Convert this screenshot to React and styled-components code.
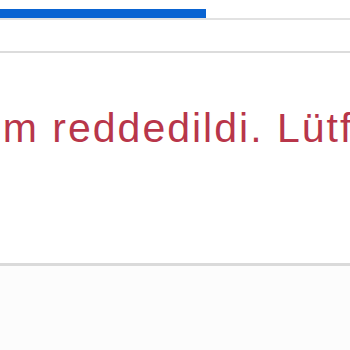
import React from 'react';
import styled, { createGlobalStyle } from 'styled-components';

const Global = createGlobalStyle`
  html, body {
    margin: 0;
    padding: 0;
    background: #fcfcfc;
    font-family: 'Liberation Sans', Arial, sans-serif;
  }
`;

const Page = styled.div`
  width: 350px;
  height: 350px;
  overflow: hidden;
  background: #fcfcfc;
`;

const Top = styled.div`
  background: #fff;
  padding-top: 9px;
`;

const Track = styled.div`
  border-bottom: 2px solid #e2e2e2;
`;

const Fill = styled.div`
  height: 9px;
  background: #0a64d2;
`;

const Spacer = styled.div`
  height: 31px;
`;

const Panel = styled.section`
  background: #fff;
  height: 210px;
  border-top: 2px solid #dcdcdc;
  border-bottom: 3px solid #dadada;
  overflow: hidden;
`;

const Message = styled.p`
  margin: 52px 0 0 -69px;
  white-space: nowrap;
  font-size: 41px;
  letter-spacing: 2px;
  line-height: normal;
  color: #b8364a;
`;

const App = () => {
  const progress = 206;
  return (
    <Page>
      <Global />
      <Top>
        <Track>
          <Fill style={{ width: progress }} />
        </Track>
        <Spacer />
      </Top>
      <Panel>
        <Message>İşlem reddedildi. Lütfen tekrar deneyin.</Message>
      </Panel>
    </Page>
  );
};

export default App;
